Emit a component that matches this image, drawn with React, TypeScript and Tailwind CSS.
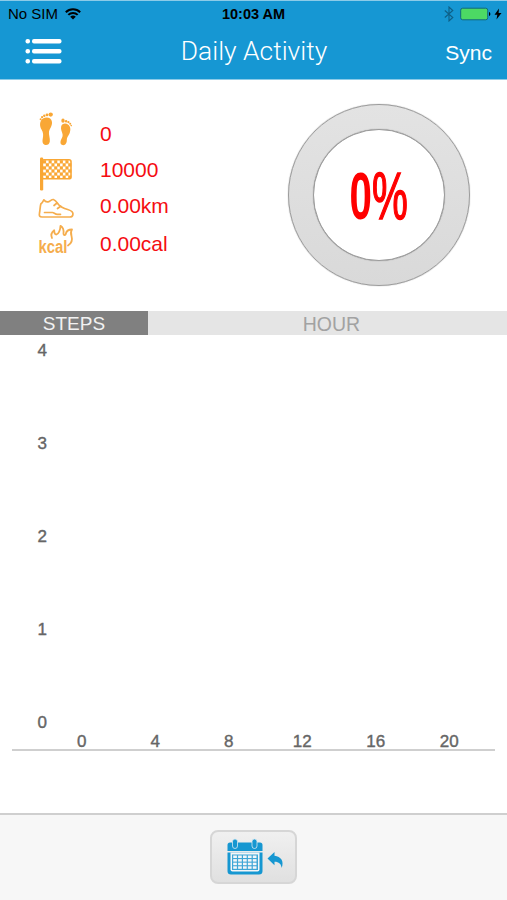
const stats = [
  { icon: <FeetIcon />, value: "0", row: "h-[38px]", pad: "pt-[7px]" },
  { icon: <FlagIcon />, value: "10000", row: "h-[39px]", pad: "pt-[5px]" },
  { icon: <ShoeIcon />, value: "0.00km", row: "h-[34px]", pad: "pt-[2px]" },
  { icon: <KcalIcon />, value: "0.00cal", row: "h-[36px]", pad: "pt-[6px]" },
];

const yLabels = [4, 3, 2, 1, 0];
const xLabels = [0, 4, 8, 12, 16, 20];

function FeetIcon() {
  return (
    <svg width="40" height="38" viewBox="0 0 40 38" fill="#f9a735">
      <path d="M8 7.500C11.500 5.500 16.500 6.500 17 11c.3 4-2.300 6.500-3 9.500-.5 3.500 1.300 6.500.8 10-.4 2.500-2 3.700-4.300 3.500-2.600-.3-3.400-3-2.800-6 .8-4 .7-6.500-1.200-9.500C4.500 15 4.300 10 8 7.500z" />
      <ellipse cx="15.700" cy="3.600" rx="2.200" ry="2.100" />
      <circle cx="12" cy="3.900" r="1.400" />
      <circle cx="9.300" cy="4.800" r="1.200" />
      <circle cx="7.100" cy="6.200" r="1.100" />
      <circle cx="5.600" cy="8.200" r="1" />
      <path d="M33 13.500c2.700 1.800 2.900 5.500 1.500 9-1.200 2.500-2.800 4-2.700 6.500.1 2.700-1.200 5.200-3.500 5.200-2.500 0-3.200-2-2.700-4.200.7-2.500 2.400-3.800 2-6.500-.4-2.800-2.100-5-1.500-7.800.7-3 4.200-4 6.900-2.200z" />
      <ellipse cx="28" cy="9.700" rx="1.700" ry="2.100" />
      <circle cx="31.100" cy="10.200" r="1.200" />
      <circle cx="33.400" cy="11.200" r="1.100" />
      <circle cx="35.200" cy="12.800" r="1" />
      <circle cx="36.200" cy="14.600" r=".8" />
    </svg>
  );
}

function FlagIcon() {
  const squares = Array.from({ length: 60 }, (_, i) => ({
    x: i % 10,
    y: Math.floor(i / 10),
  })).filter((s) => (s.x + s.y) % 2 === 0);
  return (
    <svg width="40" height="42" viewBox="0 0 40 42" className="shrink-0">
      <rect x="5" y="8.500" width="3.200" height="33" rx="1.200" fill="#f9a735" />
      <rect x="7" y="10.800" width="29" height="19" rx="2" fill="none" stroke="#f9a735" strokeWidth="1.600" />
      {squares.map((s) => (
        <rect
          key={`${s.x}-${s.y}`}
          x={8 + s.x * 2.8}
          y={11.200 + s.y * 3.050}
          width="3.100"
          height="3.300"
          fill="#f9a735"
        />
      ))}
    </svg>
  );
}

function ShoeIcon() {
  return (
    <svg
      width="40"
      height="32"
      viewBox="0 0 40 32"
      fill="none"
      stroke="#f5ad4d"
      strokeWidth="1.700"
      strokeLinecap="round"
      strokeLinejoin="round"
    >
      <path d="M5.800 16c1.700-1.300 2.300-2.800 3-4.200 1.200 1.700 3 2.600 5 1.800 1.800-.8 2.800-2.300 4.600-2.100 2.400.7 3.400 2.700 5 5 2.200 2.700 5.400 3.900 9.300 5 3.600 1.100 5.800 2.700 5.200 5.200-.4 1.800-1.600 2.300-3 2.300H7c-2.500 0-3-1.400-2.500-3.900.6-3.100.5-6 1.300-9.100z" />
      <path d="M9.500 24.500h8c1.500 0 2.500 1.800 5 1.800h3M19 17.500l3-2.500M22.500 20.500l3.200-2.300" />
    </svg>
  );
}

function KcalIcon() {
  return (
    <svg width="40" height="36" viewBox="0 0 40 36">
      <path
        d="M17 16c-1.500-3.500-.2-6 2.200-7.800.1 2.800.8 4.300 2.100 4.300 2.300 0 4-4.500 4.200-8.700 2.600 1.700 3.500 4.200 3 7.900 0 1.800 1.500 1.600 2.200.5.500-3 2.800-4.700 6.300-4.700-1.800 2.300-1.200 4.300-.5 6.500 1.200 4-.3 7.500-3.500 9.500"
        fill="none"
        stroke="#f5ad4d"
        strokeWidth="1.800"
        strokeLinecap="round"
        strokeLinejoin="round"
      />
      <text
        x="3.500"
        y="30.500"
        fill="#f5ad4d"
        fontSize="18"
        fontWeight="700"
        fontFamily="Liberation Sans, sans-serif"
        textLength="29"
        lengthAdjust="spacingAndGlyphs"
      >
        kcal
      </text>
    </svg>
  );
}

function CalendarIcon() {
  return (
    <svg width="60" height="38" viewBox="0 0 60 38" className="ml-[7px]">
      <path d="M3 4.500h30a2.500 2.500 0 0 1 2.500 2.500v6h-35V7A2.500 2.500 0 0 1 3 4.500z" fill="#1697d1" />
      <path d="M.500 14.500h35V33a3.500 3.500 0 0 1-3.500 3.500H4A3.500 3.500 0 0 1 .500 33z" fill="#1697d1" />
      <path d="M3.500 14.500h29v17a2 2 0 0 1-2 2h-25a2 2 0 0 1-2-2z" fill="#f3f6f8" />
      {[5.500, 25].map((x) => (
        <rect key={x} x={x} y="1" width="5" height="9.500" rx="2.500" fill="#1697d1" stroke="#d5e8f1" strokeWidth=".8" />
      ))}
      <rect x="5" y="16.500" width="26" height="15.500" fill="#3fa6d6" />
      {[0, 1, 2, 3].map((y) =>
        [0, 1, 2, 3, 4].map((x) => (
          <rect key={`${x}-${y}`} x={6.200 + x * 4.9} y={17.500 + y * 3.6} width="3.700" height="2.500" fill="#f3f6f8" />
        )),
      )}
      <path d="M40.500 20.500l7-6.500v3.800c6.500.7 9.800 5.500 7.200 12.200-.4-4-2.700-6.300-7.200-6.300v3.500z" fill="#1697d1" />
    </svg>
  );
}

function StatusBar() {
  return (
    <div className="grid grid-cols-3 h-[27px] items-center pl-2 pr-[5px] text-black">
      <div className="flex items-center gap-[7px] text-[15px]">
        <span>No SIM</span>
        <svg width="16" height="12" viewBox="0 0 16 12" fill="none" stroke="#000" strokeWidth="2" className="mb-[2px]">
          <path d="M.8 4.300a10.200 10.200 0 0 1 14.400 0M3.300 6.900a6.600 6.600 0 0 1 9.400 0" />
          <path d="M8 11.500L5.200 8.800a4 4 0 0 1 5.600 0z" fill="#000" stroke="none" />
        </svg>
      </div>
      <div className="text-center font-bold text-[14.5px] -ml-[3px]">10:03 AM</div>
      <div className="flex items-center justify-end pb-[2px]">
        <svg width="10" height="16" viewBox="0 0 10 16" fill="none" stroke="#0e5f86" strokeWidth="1.100">
          <path d="M.8 4.500l8 7L5 15V1l3.800 3.500-8 7" />
        </svg>
        <svg className="ml-[6px]" width="31" height="14" viewBox="0 0 31 14">
          <rect x=".7" y="1.200" width="27" height="11.600" rx="2" fill="#4cd964" stroke="#126a78" />
          <path d="M29 5c1.800.5 1.800 3.500 0 4z" fill="#000" />
        </svg>
        <svg className="ml-[3px]" width="8" height="12" viewBox="0 0 8 12">
          <path d="M5 .5L.5 6.800h2.800L2.500 11.500 7.500 5H4.600z" fill="#000" />
        </svg>
      </div>
    </div>
  );
}

export default function App() {
  return (
    <div className="flex flex-col w-[507px] h-[900px] overflow-hidden bg-white font-['Liberation_Sans',Arial,sans-serif]">
      <header className="h-[80px] bg-[#1697d3] border-t border-b border-[#8ccbe8]">
        <StatusBar />
        <div className="grid grid-cols-[1fr_auto_1fr] items-center h-[46px] pl-[24px] pr-[15px] text-white">
          <svg width="38" height="27" viewBox="0 0 38 27" fill="#fff">
            {[1, 11, 21].map((y) => (
              <g key={y}>
                <rect x="1.500" y={y} width="4.500" height="4.500" rx="2" />
                <rect x="8" y={y} width="29.500" height="4.500" rx="2" />
              </g>
            ))}
          </svg>
          <h1 className="font-['Roboto'] font-light text-[26.4px] -ml-[8px] pt-[2px]">Daily Activity</h1>
          <button className="text-right text-[21px] pt-[3px]">Sync</button>
        </div>
      </header>

      {/* Totals and goal ring */}
      <section className="flex justify-between h-[231px] pl-[35px] pr-[37px]">
        <div className="pt-[31px]">
          {stats.map((s) => (
            <div key={s.value} className={`flex items-start ${s.row}`}>
              <div className="w-[65px] shrink-0">{s.icon}</div>
              <span className={`text-[21px] text-[#f50d12] ${s.pad} leading-[32px]`}>{s.value}</span>
            </div>
          ))}
        </div>
        <div className="mt-[24px] size-[182px] rounded-full border-[1.5px] border-[#9b9b9b] bg-gradient-to-b from-[#e3e3e3] to-[#d9d9d9] p-[24px] shadow-[0_0_1px_#888]">
          <div className="flex size-full items-center justify-center rounded-full border-[1.5px] border-[#9b9b9b] bg-white shadow-[0_0_1px_#888]">
            <span className="scale-x-[0.61] text-[66px] font-bold leading-none text-[#ff0000] pt-[2px]">
              0<span className="font-normal [-webkit-text-stroke:1.5px_#f00]">%</span>
            </span>
          </div>
        </div>
      </section>

      <div className="flex h-[24px] text-[19px] leading-[26px] text-center">
        <div className="w-[148px] bg-[#808080] text-[#f2f2f2]">STEPS</div>
        <div className="flex-1 bg-[#e5e5e5] text-[19.5px] text-[#a2a2a2] pl-[8px]">HOUR</div>
      </div>

      {/* Hourly chart, no bars recorded yet */}
      <section className="h-[478px] px-[12px] pt-[4px] text-[17px] text-[#666] [-webkit-text-stroke:0.4px_#666]">
        <div className="flex flex-col justify-between h-[396px] w-[35px] text-right leading-[24px]">
          {yLabels.map((n) => (
            <span key={n}>{n}</span>
          ))}
        </div>
        <div className="flex h-[16px] border-b-2 border-[#cfcfcf] pl-[33px] leading-[13px] text-center">
          {xLabels.map((n) => (
            <span key={n} className="w-[73.5px]">
              {n}
            </span>
          ))}
        </div>
      </section>

      <footer className="flex justify-center flex-1 border-t-2 border-[#cfcfcf] bg-[#f7f7f7] pt-[15px]">
        <button className="flex items-center justify-center w-[87px] h-[54px] rounded-[8px] border-2 border-[#d6d6d6] bg-gradient-to-b from-[#f0f0f0] to-[#e0e0e0]">
          <CalendarIcon />
        </button>
      </footer>
    </div>
  );
}
